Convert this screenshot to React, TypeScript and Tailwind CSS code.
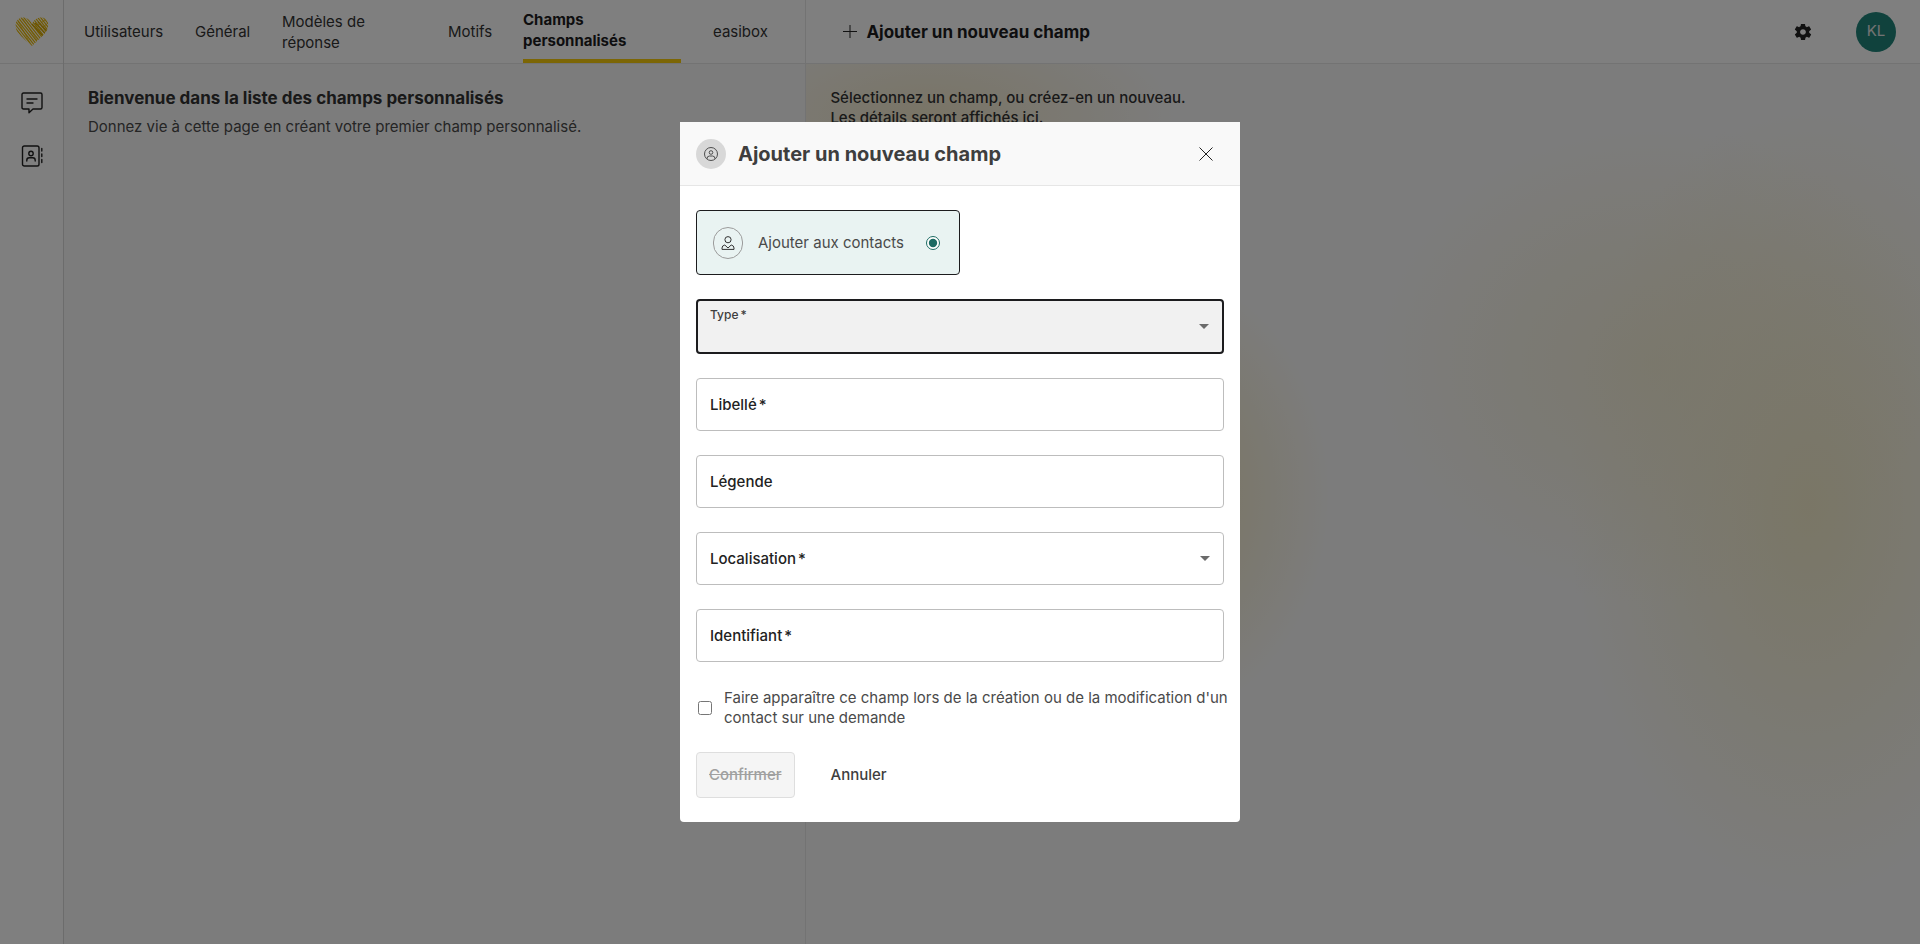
import { useState, type ReactNode } from 'react';
import { IoMdSettings } from 'react-icons/io';

const tabs = [
  { label: 'Utilisateurs', width: 'w-[79px]' },
  { label: 'Général', width: 'w-[55px]' },
  { label: 'Modèles de réponse', width: 'w-[134px]' },
  { label: 'Motifs', width: 'w-[43px]' },
  { label: 'Champs personnalisés', width: 'w-[158px]', active: true },
  { label: 'easibox', width: 'w-[54px]' },
];

// Diagonal pencil strokes of the logo, clipped to the heart
const strokes = Array.from({ length: 19 }, (_, i) => -24 + i * 2.8);

function HeartLogo() {
  return (
    <svg className="w-[34px] h-[30px]" viewBox="0 0 34 30" fill="none">
      <defs>
        <clipPath id="heart">
          <path d="M17 29 C13 25 6 20 2.500 15 C-1 9 0.500 3 5 1 C10 -0.500 15 2 17 7 C19 2 24 -0.500 29 1 C33.500 3 34.500 9 31.500 14 C28 19 21 25 17 29Z" />
        </clipPath>
      </defs>
      <g clipPath="url(#heart)" stroke="#e8b800">
        {strokes.map((x) => (
          <path key={x} d={`M${x} -2 L${x + 26} 31`} strokeWidth="1.200" />
        ))}
        <path d="M17 7 L28 19 M20 6 L30 16 M23 5 L32 14" strokeWidth="1.300" stroke="#d3a400" />
        <path d="M19 11 L30 3 M22 15 L33 6" strokeWidth="0.800" />
        <path d="M3 4 L15 26 M8 2 L22 23" strokeWidth="0.700" />
      </g>
    </svg>
  );
}

function ChatIcon() {
  return (
    <svg className="w-[22px] h-[22px]" viewBox="0 0 22 22" fill="none" stroke="#222" strokeWidth="1.400" strokeLinecap="round" strokeLinejoin="round">
      <path d="M2.500 1 H19.500 Q21 1 21 2.500 V15.500 Q21 17 19.500 17 H12 L8 20.800 V17 H2.500 Q1 17 1 15.500 V2.500 Q1 1 2.500 1Z" />
      <path d="M6 7 H16 M6 11 H12" />
    </svg>
  );
}

function ContactBookIcon() {
  return (
    <svg className="w-[22px] h-[22px]" viewBox="0 0 22 22" fill="none" stroke="#222" strokeWidth="1.400" strokeLinecap="round" strokeLinejoin="round">
      <rect x="1.500" y="1" width="16.500" height="20" rx="1.800" />
      <circle cx="10" cy="8.500" r="2.200" />
      <path d="M5.800 16 V15.200 Q5.800 12.800 8.200 12.800 H11.800 Q14.200 12.800 14.200 15.200 V16" />
      <path d="M20.800 3.500 V6 M20.800 9 V11.500 M20.800 14.500 V17.500" />
    </svg>
  );
}

function UserCircleIcon() {
  return (
    <svg className="w-[14px] h-[14px]" viewBox="0 0 14 14" fill="none" stroke="#3e3e3e" strokeWidth="0.900">
      <circle cx="7" cy="7" r="6.500" />
      <circle cx="7" cy="5.500" r="1.800" />
      <path d="M3 11.800 Q3 9 5.500 9 H8.500 Q11 9 11 11.800" />
    </svg>
  );
}

function PersonIcon() {
  return (
    <svg className="w-[14px] h-[14px]" viewBox="0 0 14 14" fill="none" stroke="#333" strokeWidth="1" strokeLinejoin="round">
      <circle cx="7" cy="3.700" r="3.100" />
      <path d="M1 13.400 V12 Q1 9.500 3.800 9 L7 12 L10.200 9 Q13 9.500 13 12 V13.400 Z" />
    </svg>
  );
}

function Caret() {
  return (
    <svg className="col-start-1 row-start-1 self-center justify-self-end mr-[13px] w-[10px] h-[5px] pointer-events-none" viewBox="0 0 10 5">
      <path d="M0 0 H10 L5 5Z" fill="#6b6b6b" />
    </svg>
  );
}

type FieldProps = { id: string; label: string; required?: boolean; floating?: boolean; children: ReactNode };

function Field({ id, label, required, floating, children }: FieldProps) {
  return (
    <div
      className={
        floating
          ? 'grid rounded-sm border-2 border-[#1c1c1e] bg-[#f1f1f1]'
          : 'grid rounded-sm border border-[#bdbdbd] bg-white'
      }
    >
      {children}
      <label
        htmlFor={id}
        className={
          floating
            ? 'col-start-1 row-start-1 self-start mt-[6px] pl-3 text-[12px] leading-4 font-medium text-[#3e3e3e] pointer-events-none'
            : 'col-start-1 row-start-1 self-center pl-[13px] text-[15px] leading-5 font-medium text-[#222] pointer-events-none'
        }
      >
        {label}
        {required && <span className="ml-[2px]">*</span>}
      </label>
    </div>
  );
}

const controlClass = 'col-start-1 row-start-1 h-[51px] w-full appearance-none bg-transparent px-[13px] text-[15px] outline-none';

function FieldDialog() {
  const [shown, setShown] = useState(false);

  return (
    <div className="fixed inset-0 flex items-center justify-center bg-black/50">
      <div role="dialog" aria-labelledby="dialog-title" className="w-full max-w-[560px] overflow-hidden rounded-b-sm bg-white">
        <header className="flex h-16 items-center border-b border-[#e6e6e6] bg-[#f9f9f9] px-4">
          <span className="flex h-[30px] w-[30px] items-center justify-center rounded-full bg-[#d8d8d8]">
            <UserCircleIcon />
          </span>
          <h2 id="dialog-title" className="ml-3 text-[20px] leading-6 font-bold text-[#3e3e3e]">
            Ajouter un nouveau champ
          </h2>
          <button type="button" aria-label="Fermer" className="ml-auto flex h-9 w-9 items-center justify-center">
            <svg className="h-[14px] w-[14px]" viewBox="0 0 14 14" stroke="#222" strokeWidth="1">
              <path d="M0.500 0.500 L13.500 13.500 M13.500 0.500 L0.500 13.500" />
            </svg>
          </button>
        </header>

        <form className="flex flex-col gap-6 px-4 py-6">
          <label className="flex h-[65px] w-1/2 items-center rounded-sm border border-[#1c1c1e] bg-[#e9f3f2] pl-4 pr-[19px]">
            <span className="flex h-8 w-[30px] items-center justify-center rounded-full border border-[#9b9b9b]">
              <PersonIcon />
            </span>
            <span className="ml-[15px] text-[15px] leading-5 text-[#4a4a4a]">Ajouter aux contacts</span>
            <input type="radio" name="target" defaultChecked className="ml-auto h-[14px] w-[14px] accent-[#1b6a62]" />
          </label>

          <Field id="type" label="Type" required floating>
            <select id="type" className={controlClass} />
            <Caret />
          </Field>
          <Field id="libelle" label="Libellé" required>
            <input id="libelle" type="text" className={controlClass} />
          </Field>
          <Field id="legende" label="Légende">
            <input id="legende" type="text" className={controlClass} />
          </Field>
          <Field id="localisation" label="Localisation" required>
            <select id="localisation" className={controlClass} />
            <Caret />
          </Field>
          <Field id="identifiant" label="Identifiant" required>
            <input id="identifiant" type="text" className={controlClass} />
          </Field>

          <label className="-mr-2 flex items-center gap-3 pt-[2px] pl-[2px] text-[15px] leading-5 text-[#4a4a4a]">
            <input type="checkbox" checked={shown} onChange={() => setShown(!shown)} className="h-[14px] w-[14px] shrink-0" />
            <span>Faire apparaître ce champ lors de la création ou de la modification d'un contact sur une demande</span>
          </label>

          <div className="flex gap-6">
            <button type="submit" disabled className="h-[46px] rounded-sm border border-[#dedede] bg-[#f5f5f5] px-3 text-[15px] font-medium text-[#a0a0a0] line-through">
              Confirmer
            </button>
            <button type="button" className="h-[46px] px-3 text-[15px] font-medium text-[#3e3e3e]">
              Annuler
            </button>
          </div>
        </form>
      </div>
    </div>
  );
}

export default function App() {
  return (
    <div className="flex min-h-screen bg-white font-['Inter',sans-serif] text-[#222]">
      <aside className="flex w-16 shrink-0 flex-col border-r border-[#d8d8d8]">
        <a href="#" aria-label="Accueil" className="flex h-16 items-center justify-center border-b border-[#e6e6e6]">
          <HeartLogo />
        </a>
        <nav className="flex flex-col items-center gap-[31px] pt-7">
          <a href="#" aria-label="Demandes"><ChatIcon /></a>
          <a href="#" aria-label="Contacts"><ContactBookIcon /></a>
        </nav>
      </aside>

      <div className="flex min-w-0 flex-1">
        <section className="flex w-2/5 shrink-0 flex-col border-r border-[#e6e6e6] bg-[#f9f9f9]">
          <nav className="flex h-16 gap-8 border-b border-[#e6e6e6] bg-white pl-5">
            {tabs.map((tab) => (
              <a
                key={tab.label}
                href="#"
                className={`${tab.width} flex shrink-0 items-center text-[15px] leading-[21px] ${
                  tab.active ? 'border-b-4 border-[#f9cc0b] font-bold text-[#1c1c1e]' : 'text-[#333]'
                }`}
              >
                {tab.label}
              </a>
            ))}
          </nav>
          <div className="px-6 pt-6">
            <h1 className="text-[17px] leading-5 font-bold text-[#333]">Bienvenue dans la liste des champs personnalisés</h1>
            <p className="mt-[9px] text-[15px] leading-5 text-[#4a4a4a]">Donnez vie à cette page en créant votre premier champ personnalisé.</p>
          </div>
        </section>

        <main className="flex min-w-0 flex-1 flex-col">
          <header className="flex h-16 items-center border-b border-[#e6e6e6] bg-white pl-9 pr-6">
            <button type="button" className="flex items-center gap-2 text-[17px] leading-5 font-bold text-[#1c1c1e]">
              <svg className="h-4 w-4" viewBox="0 0 16 16" stroke="#222" strokeWidth="1">
                <path d="M1 7.500 H15" />
                <path d="M8 1 V14" />
              </svg>
              Ajouter un nouveau champ
            </button>
            <button type="button" aria-label="Paramètres" className="ml-auto mr-[43px]">
              <IoMdSettings className="h-5 w-5" />
            </button>
            <button type="button" className="h-10 w-10 rounded-full bg-[#20857b] text-[15px] text-[#e6e6e6]">KL</button>
          </header>
          <div className="flex-1 bg-[#f9f9f9] bg-[radial-gradient(ellipse_250px_110px_at_11%_6%,#f3e9cc_0%,#f3e9cc80_50%,#f3e9cc00_100%),radial-gradient(ellipse_180px_230px_at_31%_49%,#f4eac6_20%,#f4eac680_60%,#f4eac600_100%),radial-gradient(ellipse_280px_240px_at_76%_34%,#f4edd0b3_0%,#f4edd066_50%,#f4edd000_100%),radial-gradient(ellipse_240px_400px_at_90%_50%,#f4edcc_0%,#f4edcc80_50%,#f4edcc00_100%)] px-6 pt-6">
            <p className="text-[15px] leading-5 font-medium text-[#333]">
              Sélectionnez un champ, ou créez-en un nouveau.
              <br />
              Les détails seront affichés ici.
            </p>
          </div>
        </main>
      </div>

      <FieldDialog />
    </div>
  );
}
